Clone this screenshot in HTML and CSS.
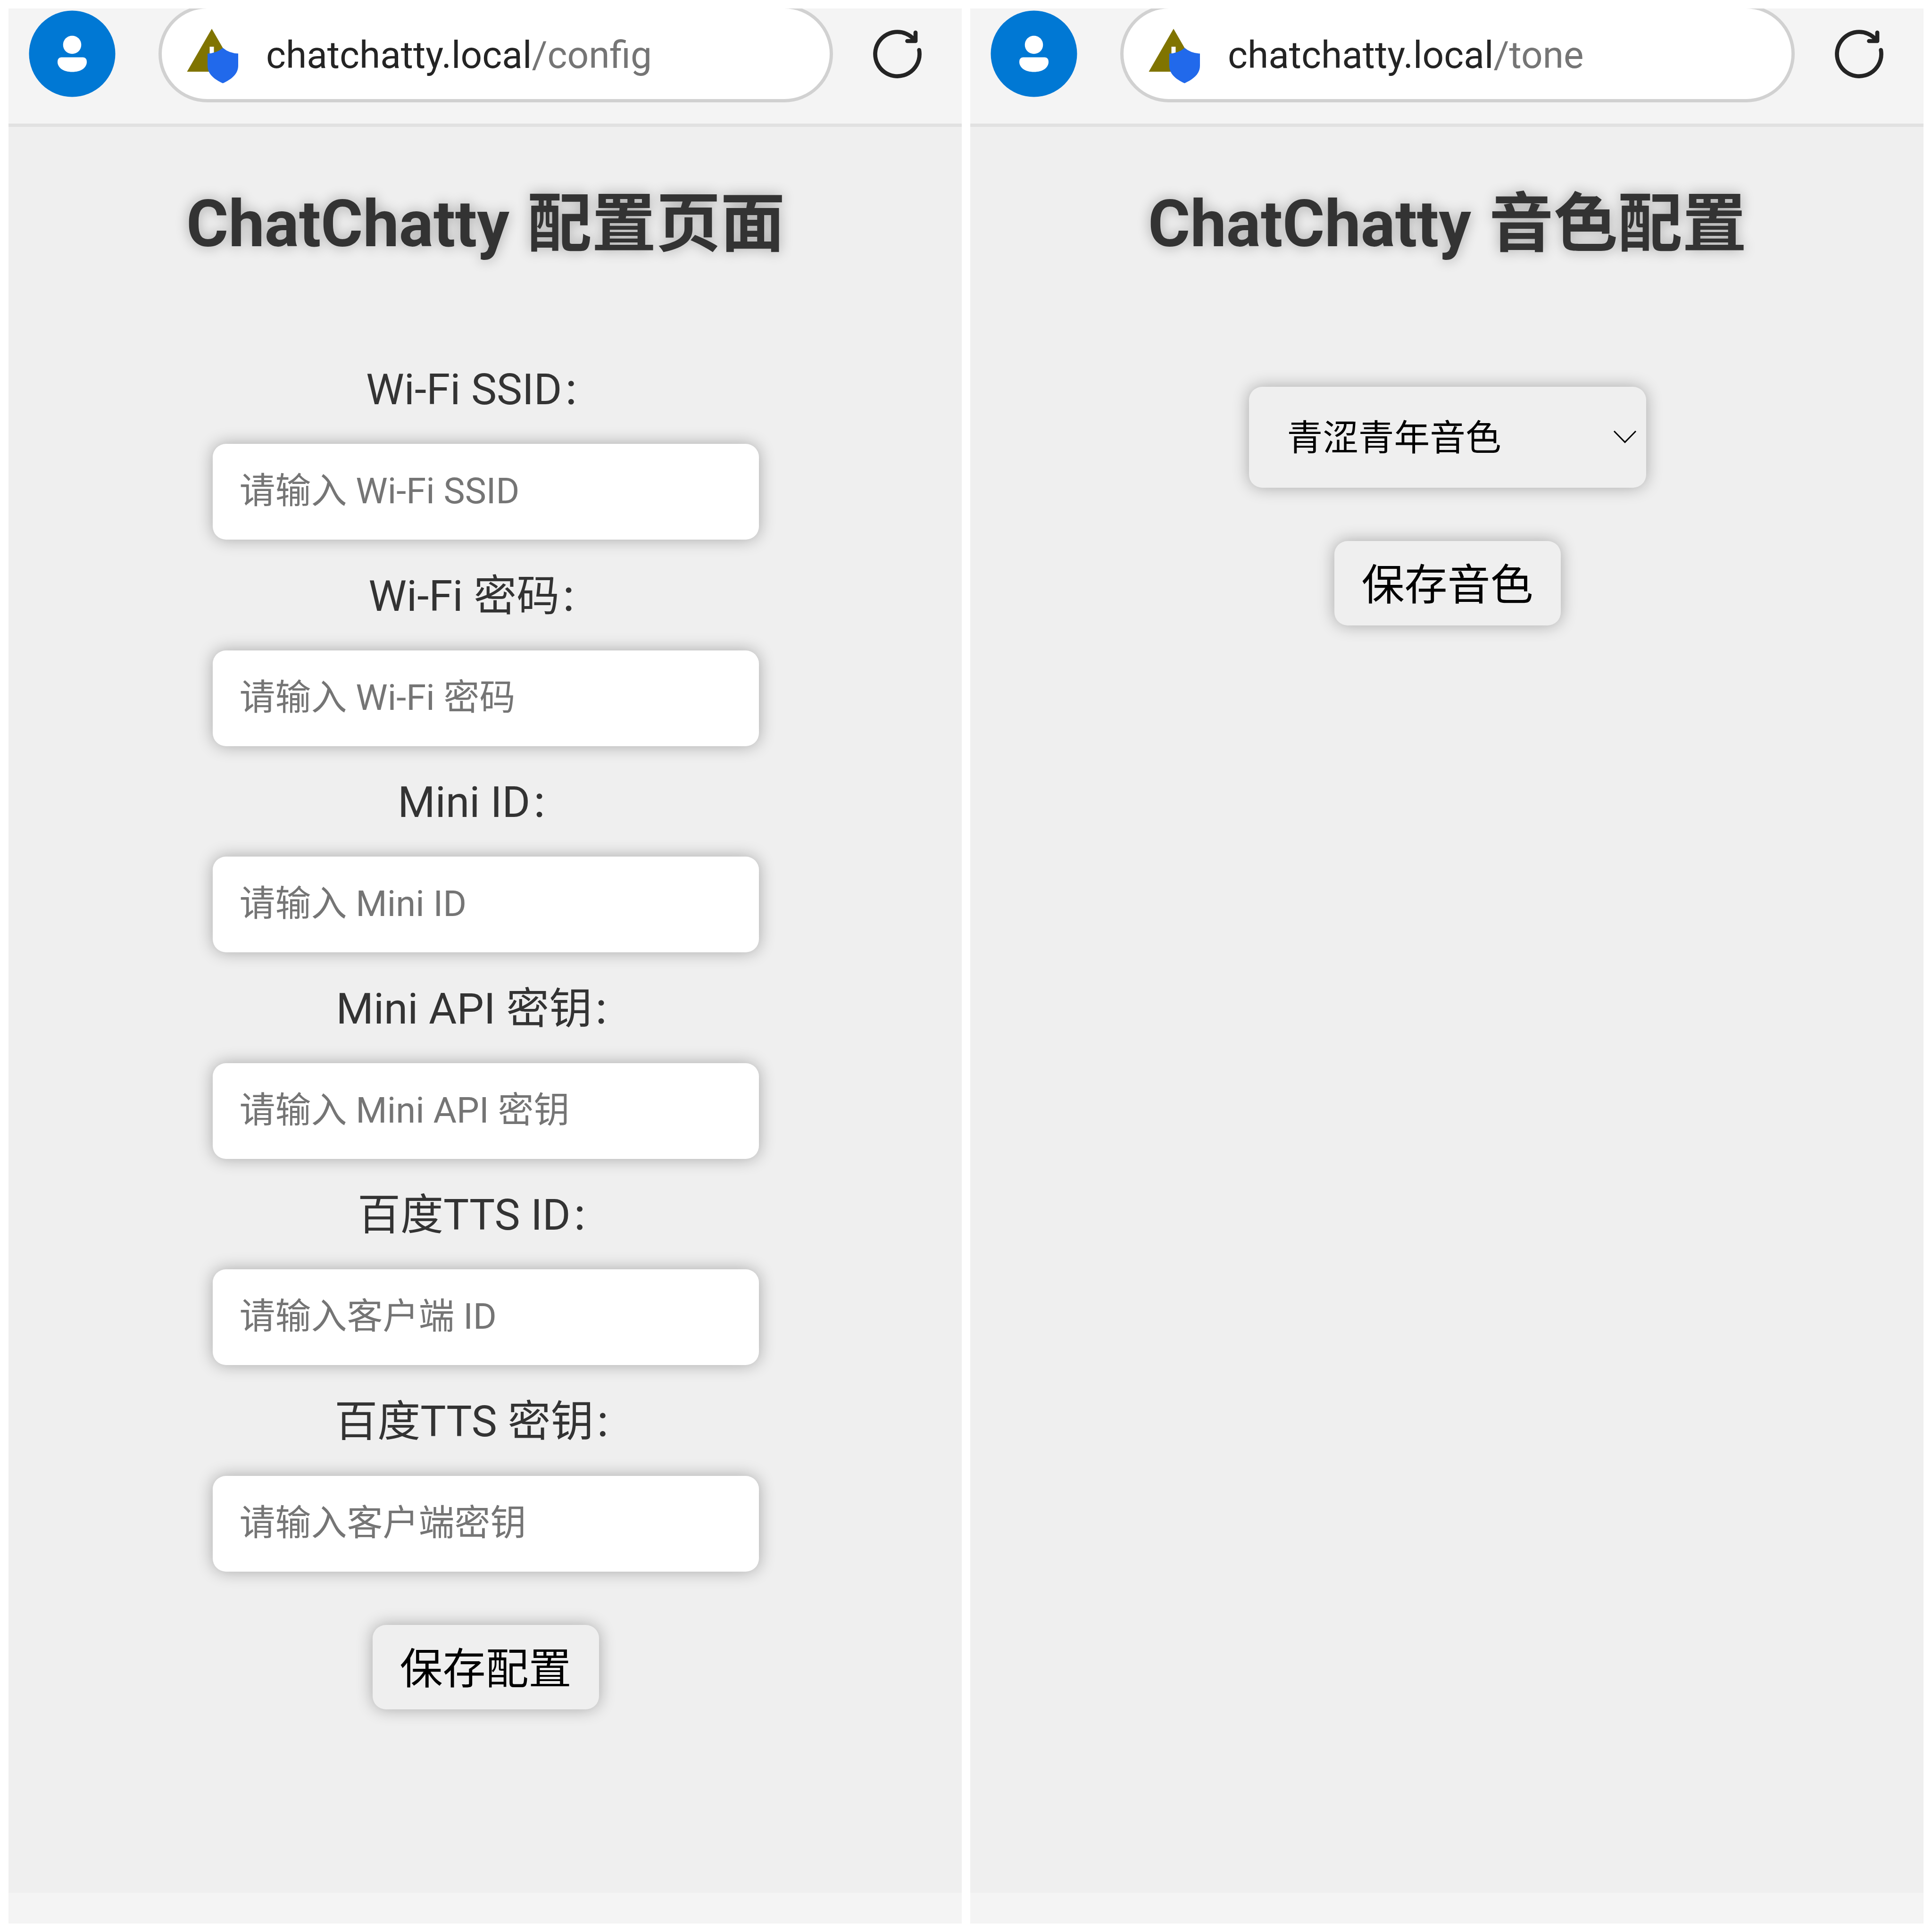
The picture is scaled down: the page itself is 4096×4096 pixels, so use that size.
FILE: index.html
```html
<!DOCTYPE html>
<html lang="zh-CN">
<head>
<meta charset="utf-8">
<title>ChatChatty</title>
<link rel="stylesheet" href="styles.css">
</head>
<body>
<svg width="0" height="0" class="sprite">
  <symbol id="user" viewBox="0 0 184 184"><circle cx="92" cy="92" r="91.5" fill="#0078d4"/><ellipse cx="92" cy="73" rx="19.3" ry="19.3" fill="#fff"/><path d="M69 99.500H115Q123 100 123 109C123 122 110 130.500 92 130.500S61 122 61 109Q61 100 69 99.500Z" fill="#fff"/></symbol>
  <symbol id="site" viewBox="0 0 110 116"><path d="M53 0 105.500 91H.5Z" fill="#807400"/><path d="M48.500 38h9v16h-9z" fill="#fff"/><path d="M76.500 40.500Q90 52 109 52.500V78C109 96 95 107 76.500 115.500 58 107 44 96 44 78V52.500Q63 52 76.500 40.500Z" fill="#2169eb"/></symbol>
  <symbol id="reload" viewBox="-52 -52 104 104"><path d="M46.700 -8A47 47 0 1 1 36 -30.200M39 -45V-27H21.500" fill="none" stroke="#242424" stroke-width="8.700" stroke-linecap="round" stroke-linejoin="round"/></symbol>
</svg>
<section class="screen">
  <header class="bar">
    <svg class="avatar"><use href="#user"/></svg>
    <div class="address"><svg class="site"><use href="#site"/></svg><span>chatchatty.local<span class="path">/config</span></span></div>
    <svg class="reload"><use href="#reload"/></svg>
  </header>
  <main class="page">
    <h1>ChatChatty 配置页面</h1>
    <form class="form">
      <label>Wi-Fi SSID<span class="colon">：</span></label><input placeholder="请输入 Wi-Fi SSID">
      <label>Wi-Fi 密码<span class="colon">：</span></label><input placeholder="请输入 Wi-Fi 密码">
      <label>Mini ID<span class="colon">：</span></label><input placeholder="请输入 Mini ID">
      <label>Mini API 密钥<span class="colon">：</span></label><input placeholder="请输入 Mini API 密钥">
      <label>百度TTS ID<span class="colon">：</span></label><input placeholder="请输入客户端 ID">
      <label>百度TTS 密钥<span class="colon">：</span></label><input placeholder="请输入客户端密钥">
      <button type="button">保存配置</button>
    </form>
  </main>
</section>
<section class="screen">
  <header class="bar">
    <svg class="avatar"><use href="#user"/></svg>
    <div class="address"><svg class="site"><use href="#site"/></svg><span>chatchatty.local<span class="path">/tone</span></span></div>
    <svg class="reload"><use href="#reload"/></svg>
  </header>
  <main class="page">
    <h1>ChatChatty 音色配置</h1>
    <form class="form tone">
      <div class="select"><span>青涩青年音色</span><svg class="chevron" viewBox="0 0 50 30"><path d="M2 2 25 25.500 48 2" fill="none" stroke="#000" stroke-width="3"/></svg></div>
      <button type="button">保存音色</button>
    </form>
  </main>
</section>
</body>
</html>
```
FILE: styles.css
```css
* { box-sizing: border-box; }
body {
  margin: 0;
  width: 4096px;
  height: 4096px;
  padding: 18px;
  display: flex;
  gap: 18px;
  background: #fff;
  font-family: Roboto, "Noto Sans CJK SC", sans-serif;
  overflow: hidden;
}
.sprite { display: none; }
.screen {
  width: 2021px;
  height: 4060px;
  display: flex;
  flex-direction: column;
  overflow: hidden;
  background: #f4f4f4;
}
.bar {
  flex: none;
  height: 251px;
  padding: 0 0 52px 43px;
  border-bottom: 7px solid #e1e1e1;
  display: flex;
  align-items: center;
}
.avatar { flex: none; width: 184px; height: 184px; }
.address {
  flex: none;
  width: 1430px;
  height: 206px;
  margin: 0 84px 0 91px;
  padding-left: 53px;
  border: 7px solid #d1d1d1;
  border-radius: 103px;
  background: #fff;
  display: flex;
  align-items: center;
  gap: 58px;
  font-size: 80.200px;
  color: #242424;
}
.path { color: #757575; }
.site { flex: none; width: 110px; height: 116px; margin-top: 10px; }
.address > span { padding-top: 5px; }
.reload { flex: none; width: 104px; height: 104px; }
.page {
  height: 3744px;
  padding-left: 2px;
  background: #efefef;
  display: flex;
  flex-direction: column;
  align-items: center;
  color: #333;
}
h1 {
  margin: 106px 0 0;
  height: 200px;
  line-height: 200px;
  font-size: 136.500px;
  font-weight: 700;
  word-spacing: 4px;
  white-space: nowrap;
  text-shadow: 0 0 28px rgba(0, 0, 0, .3);
}
.form {
  margin-top: 194px;
  display: flex;
  flex-direction: column;
  align-items: center;
}
label {
  height: 172px;
  line-height: 114px;
  font-size: 91px;
}
label:not(:first-child) { margin-top: -3px; }
.colon { margin-right: 14px; font-size: .85em; line-height: 1; }
input {
  width: 1158px;
  height: 203px;
  margin-bottom: 65.500px;
  padding: 0 57px 3px;
  border: 0;
  border-radius: 28px;
  background: #fff;
  font: 76px Roboto, "Noto Sans CJK SC", sans-serif;
  box-shadow: 0 0 34px rgba(0, 0, 0, .3);
}
input::placeholder { color: #757575; }
button {
  width: 480px;
  height: 179px;
  margin-top: 48px;
  padding: 0 0 9px;
  border: 0;
  border-radius: 28px;
  background: #efefef;
  color: #000;
  font: 91px Roboto, "Noto Sans CJK SC", sans-serif;
  box-shadow: 0 0 34px rgba(0, 0, 0, .3);
}
.tone { margin-top: 245px; }
.select {
  width: 842px;
  height: 214px;
  padding: 0 20px 0 81px;
  border-radius: 28px;
  background: #efefef;
  color: #000;
  font-size: 75.700px;
  display: flex;
  align-items: center;
  justify-content: space-between;
  box-shadow: 0 0 34px rgba(0, 0, 0, .3);
}
.select span { padding-bottom: 11px; }
.chevron { width: 50px; height: 30px; }
.tone button { margin-top: 113px; }
```
